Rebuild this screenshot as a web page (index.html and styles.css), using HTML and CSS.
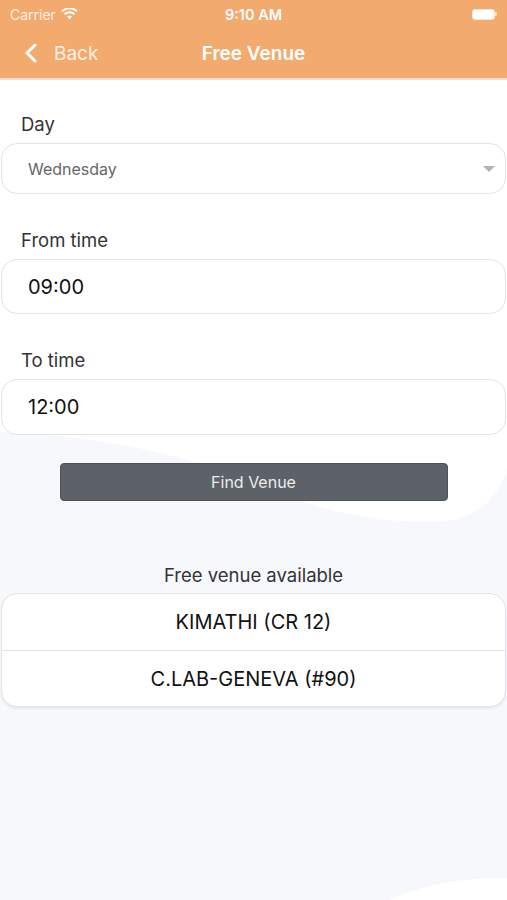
FILE: index.html
```html
<!doctype html>
<html>
<head>
	<meta charset="utf-8" />
	<title>Free Venue</title>
	<link rel="stylesheet" href="styles.css">
</head>
<body>
	<svg class="backdrop" width="507" height="900" viewBox="0 0 507 900">
		<path d="M0 80 H507 V470 C495 505 470 522 430 522 C360 522 300 505 240 478 C170 450 90 436 0 432 Z" fill="#ffffff" />
		<path d="M390 900 C420 885 460 878 507 878 V900 Z" fill="#ffffff" />
	</svg>
	<div class="header">
		<div class="status">
			<div class="carrier">Carrier
				<svg width="17" height="12" viewBox="0 0 17 12"><path d="M8.5 11.5 L6 8.6 A3.6 3.6 0 0 1 11 8.6 Z" fill="#fff"/><path d="M3.6 6.2 A7 7 0 0 1 13.4 6.2" stroke="#fff" stroke-width="2" fill="none"/><path d="M1 3.4 A10.8 10.8 0 0 1 16 3.4" stroke="#fff" stroke-width="2" fill="none"/></svg>
			</div>
			<div class="clock">9:10 AM</div>
			<div class="battery"><span class="cell"></span><span class="nub"></span></div>
		</div>
		<div class="navbar">
			<div class="back">
				<svg width="12" height="20" viewBox="0 0 12 20"><path d="M10 2 L2 10 L10 18" stroke="#fff" stroke-width="3" fill="none" stroke-linecap="round" stroke-linejoin="round"/></svg>
				<span>Back</span>
			</div>
			<div class="title">Free Venue</div>
			<div></div>
		</div>
	</div>
	<div class="content">
		<label class="label">Day</label>
		<div class="field select">
			<span>Wednesday</span>
			<span class="caret"></span>
		</div>
		<label class="label gap">From time</label>
		<div class="field time">09:00</div>
		<label class="label gap">To time</label>
		<div class="field time tall">12:00</div>
		<div class="centered">
			<button class="find">Find Venue</button>
		</div>
		<div class="result-title">Free venue available</div>
		<div class="venues">
			<div class="venue">KIMATHI (CR 12)</div>
			<div class="venue">C.LAB-GENEVA (#90)</div>
		</div>
	</div>
</body>
</html>
```

FILE: styles.css
```css
body { margin: 0; width: 507px; height: 900px; overflow: hidden; position: relative; background: #f6f8fc; font-family: 'Inter', 'Noto Sans', sans-serif; color: #333; }
.backdrop { position: absolute; left: 0; top: 0; }
.header { position: relative; background: #f3aa6f; color: #fff; height: 78px; border-bottom: 2px solid #f0ddd0; }
.status { height: 28px; display: grid; grid-template-columns: 1fr auto 1fr; align-items: center; padding: 0 10px; }
.carrier { font-size: 14px; display: flex; align-items: center; gap: 5px; color: #fdf0e4; }
.clock { font-size: 14.5px; font-weight: 600; }
.battery { justify-self: end; display: flex; align-items: center; }
.cell { width: 21px; height: 9px; background: #fff; border-radius: 3px; border: 1px solid #fbe3cf; }
.nub { width: 2px; height: 4px; background: #fbe3cf; border-radius: 0 1px 1px 0; }
.navbar { height: 50px; display: grid; grid-template-columns: 1fr auto 1fr; align-items: center; }
.back { display: flex; align-items: center; padding-left: 25px; font-size: 19px; color: #fdf0e4; }
.back span { margin-left: 17px; }
.title { font-size: 19px; font-weight: 600; }
.content { position: relative; padding-top: 33px; }
.label { display: block; margin: 0 21px 8px; font-size: 18.5px; line-height: 22px; color: #333; }
.label.gap { margin-top: 35px; }
.field { margin: 0 1px; background: #fff; border: 1px solid #e3e3e3; border-radius: 16px; box-sizing: border-box; display: flex; align-items: center; padding-left: 26px; }
.select { height: 51px; font-size: 16px; color: #666; justify-content: space-between; padding-right: 10px; }
.caret { width: 0; height: 0; border-left: 6px solid transparent; border-right: 6px solid transparent; border-top: 6px solid #b3b3b3; }
.time { height: 55px; font-size: 20px; color: #111; }
.time.tall { height: 56px; }
.centered { text-align: center; margin-top: 28px; }
button.find { width: 388px; height: 38px; background: #5d6168; color: #ececec; border: 1px solid #4e5258; border-radius: 4px; font-family: 'Inter', 'Noto Sans', sans-serif; font-size: 16px; }
.result-title { text-align: center; font-size: 18.5px; line-height: 22px; margin-top: 63px; margin-bottom: 7px; color: #333; }
.venues { margin: 0 1px; background: #fff; border: 1px solid #e3e3e3; border-radius: 16px; box-shadow: 0 2px 2px rgba(0,0,0,0.06); }
.venue { height: 56px; display: flex; align-items: center; justify-content: center; font-size: 20px; color: #111; }
.venue + .venue { border-top: 1px solid #e5e5e5; height: 55px; }
```
